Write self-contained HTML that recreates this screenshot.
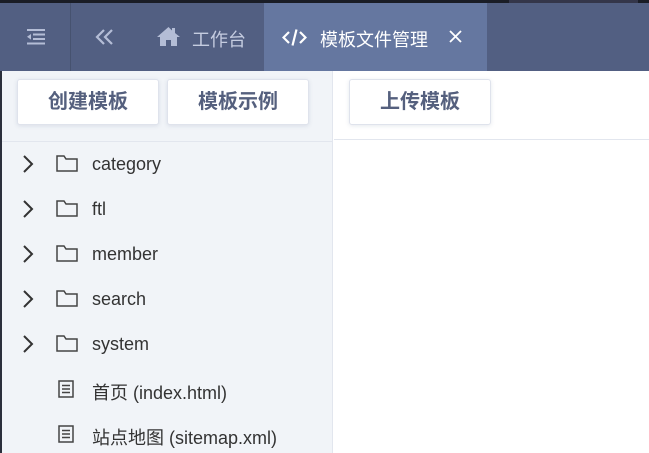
<!DOCTYPE html>
<html><head><meta charset="utf-8"><style>
*{margin:0;padding:0;box-sizing:border-box}
body{width:649px;height:453px;overflow:hidden;background:#fff;font-family:"Liberation Sans","Noto Sans CJK SC",sans-serif;position:relative}
.topbar{position:absolute;left:0;top:0;width:649px;height:3px;background:#1a1d26}
.topbar i{position:absolute;left:509px;width:129px;height:3px;background:#34364a}
.hdr{position:absolute;left:0;top:3px;width:649px;height:68px;background:#525f82}
.sep{position:absolute;left:70px;top:3px;width:1px;height:68px;background:#46526f}
.tab{position:absolute;left:264px;top:3px;width:223px;height:68px;background:#6577a0}
.t{position:absolute;color:#c5cce0;font-size:18px;top:26px;white-space:nowrap}
.left{position:absolute;left:0;top:71px;width:2px;height:382px;background:#2b2f3c}
.side{position:absolute;left:2px;top:71px;width:331px;height:382px;background:#f1f4f8;border-right:1px solid #e2e6ee}
.btn{position:absolute;top:79px;height:46px;width:142px;background:#fff;border:1px solid #dfe3ec;border-radius:3px;box-shadow:0 1px 4px rgba(90,100,140,.15);color:#55607e;font-weight:bold;font-size:20px;text-align:center;line-height:44px;white-space:nowrap}
.hl{position:absolute;height:1px;background:#e2e6ee}
.row{position:absolute;left:0;height:24px;width:330px;font-size:18px;color:#333;white-space:nowrap}
.row span{position:absolute;left:92px;top:2px}
</style></head><body>
<div class="topbar"><i></i></div>
<div class="hdr"></div>
<div class="sep"></div>
<div class="tab"></div>
<svg style="position:absolute;left:26px;top:29px" width="20" height="16" viewBox="0 0 20 16" fill="#b4bdd6"><rect x="1" y="0" width="18" height="2"/><rect x="7" y="4.5" width="12" height="2"/><rect x="7" y="9" width="12" height="2"/><rect x="1" y="13.5" width="18" height="2"/><path d="M1 7.8L5 5v5.6z"/></svg>
<svg style="position:absolute;left:95px;top:28px" width="20" height="18" viewBox="0 0 20 18" fill="none" stroke="#b4bdd6" stroke-width="2.2"><path d="M9 2L2 9l7 7M17 2l-7 7 7 7"/></svg>
<svg style="position:absolute;left:157px;top:27px" width="23" height="19" viewBox="0 0 23 19" fill="#b4bdd6"><path d="M11.5 0L0 10h3v9h6v-6h5v6h6v-9h3L18 6V1h-3v2.5z"/></svg>
<div class="t" style="left:192px">工作台</div>
<svg style="position:absolute;left:282px;top:29px" width="25" height="17" viewBox="0 0 25 17" fill="none" stroke="#fff" stroke-width="2.2"><path d="M7 3L1.5 8.5 7 14M18 3l5.5 5.5L18 14M14.5 0.5l-4 16"/></svg>
<div class="t" style="left:320px;color:#fff">模板文件管理</div>
<svg style="position:absolute;left:449px;top:30px" width="13" height="13" viewBox="0 0 13 13" stroke="#fff" stroke-width="1.8"><path d="M1 1l11 11M12 1L1 12"/></svg>
<div class="left"></div>
<div class="side"></div>
<div class="btn" style="left:17px">创建模板</div>
<div class="btn" style="left:167px">模板示例</div>
<div class="btn" style="left:349px">上传模板</div>
<div class="hl" style="left:2px;top:141px;width:331px"></div>
<div class="hl" style="left:334px;top:139px;width:315px"></div>
<div class="row" style="top:152px"><svg style="position:absolute;left:22px;top:3px" width="12" height="18" viewBox="0 0 12 18" fill="none" stroke="#333" stroke-width="2"><path d="M2 1l8 8-8 8"/></svg><svg style="position:absolute;left:56px;top:3px" width="22" height="17" viewBox="0 0 22 17" fill="none" stroke="#444" stroke-width="1.5"><path d="M1 1h7l2 3h11v12H1z"/></svg><span>category</span></div>
<div class="row" style="top:197px"><svg style="position:absolute;left:22px;top:3px" width="12" height="18" viewBox="0 0 12 18" fill="none" stroke="#333" stroke-width="2"><path d="M2 1l8 8-8 8"/></svg><svg style="position:absolute;left:56px;top:3px" width="22" height="17" viewBox="0 0 22 17" fill="none" stroke="#444" stroke-width="1.5"><path d="M1 1h7l2 3h11v12H1z"/></svg><span>ftl</span></div>
<div class="row" style="top:242px"><svg style="position:absolute;left:22px;top:3px" width="12" height="18" viewBox="0 0 12 18" fill="none" stroke="#333" stroke-width="2"><path d="M2 1l8 8-8 8"/></svg><svg style="position:absolute;left:56px;top:3px" width="22" height="17" viewBox="0 0 22 17" fill="none" stroke="#444" stroke-width="1.5"><path d="M1 1h7l2 3h11v12H1z"/></svg><span>member</span></div>
<div class="row" style="top:287px"><svg style="position:absolute;left:22px;top:3px" width="12" height="18" viewBox="0 0 12 18" fill="none" stroke="#333" stroke-width="2"><path d="M2 1l8 8-8 8"/></svg><svg style="position:absolute;left:56px;top:3px" width="22" height="17" viewBox="0 0 22 17" fill="none" stroke="#444" stroke-width="1.5"><path d="M1 1h7l2 3h11v12H1z"/></svg><span>search</span></div>
<div class="row" style="top:332px"><svg style="position:absolute;left:22px;top:3px" width="12" height="18" viewBox="0 0 12 18" fill="none" stroke="#333" stroke-width="2"><path d="M2 1l8 8-8 8"/></svg><svg style="position:absolute;left:56px;top:3px" width="22" height="17" viewBox="0 0 22 17" fill="none" stroke="#444" stroke-width="1.5"><path d="M1 1h7l2 3h11v12H1z"/></svg><span>system</span></div>
<div class="row" style="top:377px"><svg style="position:absolute;left:58px;top:3px" width="16" height="18" viewBox="0 0 16 18" fill="none" stroke="#444" stroke-width="1.5"><path d="M1 1h14v16H1zM4 5.5h8M4 9h8M4 12.5h8"/></svg><span>首页 (index.html)</span></div>
<div class="row" style="top:422px"><svg style="position:absolute;left:58px;top:3px" width="16" height="18" viewBox="0 0 16 18" fill="none" stroke="#444" stroke-width="1.5"><path d="M1 1h14v16H1zM4 5.5h8M4 9h8M4 12.5h8"/></svg><span>站点地图 (sitemap.xml)</span></div>
</body></html>
